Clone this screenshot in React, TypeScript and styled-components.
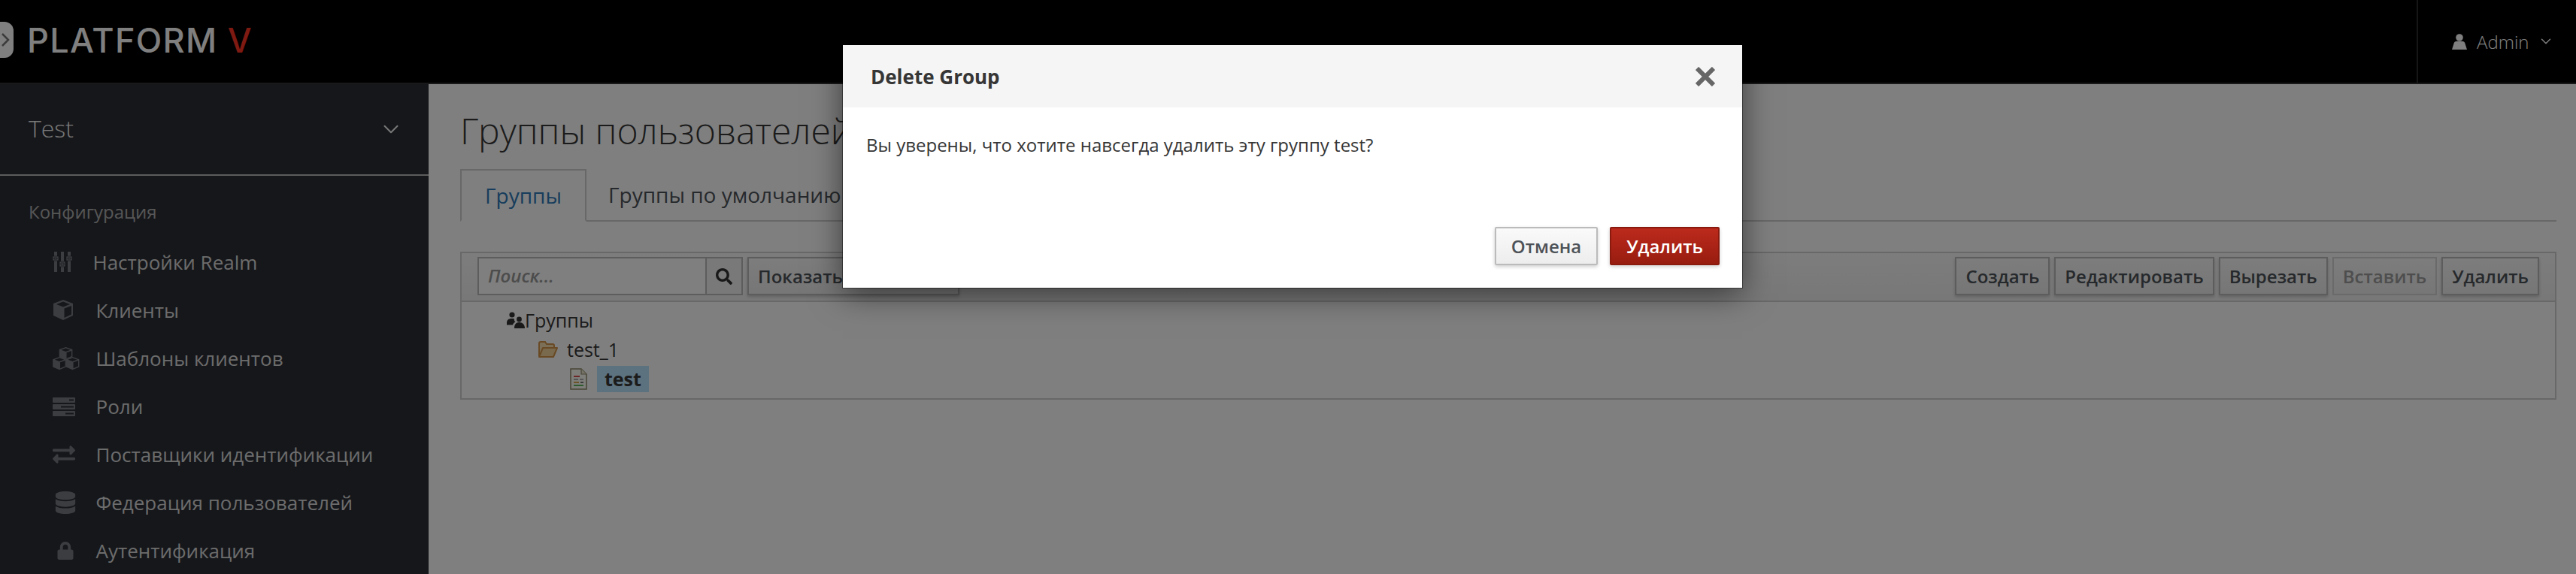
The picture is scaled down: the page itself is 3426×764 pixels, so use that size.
import React from 'react'
import styled, { createGlobalStyle } from 'styled-components'
import { FaDatabase, FaExchangeAlt, FaLock, FaSearch } from 'react-icons/fa'
import { LuChevronDown } from 'react-icons/lu'

const GlobalStyle = createGlobalStyle`
  html, body { margin: 0; padding: 0; height: 100%; }
  body { font-family: "Open Sans", "Noto Sans", sans-serif; color: #363636; background: #fff; }
  * { box-sizing: border-box; }
`

const Page = styled.div`
  position: relative;
  width: 3426px;
  height: 764px;
  overflow: hidden;
  display: flex;
  flex-direction: column;
`
const Header = styled.header`
  height: 112px;
  flex: none;
  background: #000;
  border-bottom: 2px solid #333;
  display: flex;
  justify-content: space-between;
`
const Logo = styled.div`
  display: flex;
  align-items: center;
  gap: 18px;
  padding-bottom: 4px;
`
const LogoMark = styled.div`
  width: 18px;
  height: 48px;
  background: #fff;
  border-radius: 0 12px 12px 0;
  color: #777;
  display: flex;
  align-items: center;
`
const LogoText = styled.span`
  font-family: Inter, "Open Sans", sans-serif;
  font-size: 45px;
  font-weight: 500;
  line-height: 1;
  color: #fff;
  letter-spacing: 1.3px;
`
const LogoV = styled.span`
  color: #fc3424;
`
const UserMenu = styled.div`
  width: 212px;
  border-left: 2px solid #2c2c2c;
  display: flex;
  align-items: center;
  padding-left: 45px;
  color: #fff;
  font-size: 24px;
  font-weight: 300;
`
const UserName = styled.span`
  margin: 0 11px 0 13px;
`
const Body = styled.div`
  flex: 1;
  display: flex;
  min-height: 0;
`
const Sidebar = styled.aside`
  width: 570px;
  flex: none;
  background: #2c2f36;
`
const RealmRow = styled.div`
  height: 122px;
  padding: 0 33px 0 38px;
  display: flex;
  align-items: center;
  justify-content: space-between;
  border-bottom: 2px solid #b8b8b8;
  color: #f0f0f0;
  font-size: 32px;
  font-weight: 300;
`
const RealmName = styled.span`
  padding-bottom: 3px;
`
const SectionLabel = styled.div`
  padding: 30px 0 0 38px;
  height: 82px;
  line-height: 36px;
  font-size: 24px;
  color: #adadad;
`
const NavList = styled.div`
  display: flex;
  flex-direction: column;
`
const NavItem = styled.div<{ $first?: boolean }>`
  height: ${p => (p.$first ? 65 : 64)}px;
  padding-left: 70px;
  display: flex;
  align-items: center;
  font-size: 26px;
  color: #d8d8d8;
`
const NavIcon = styled.span<{ $first?: boolean; $inset?: number }>`
  width: ${p => (p.$first ? 53.5 : 57.5)}px;
  padding-left: ${p => p.$inset ?? 0}px;
  flex: none;
  color: #767a80;
  display: flex;
  align-items: center;
`
const Main = styled.main`
  flex: 1;
  padding: 0 26px 0 42px;
  background: #fff;
`
const Title = styled.h1`
  margin: 0;
  height: 113px;
  padding-top: 27px;
  font-size: 48px;
  line-height: 70px;
  font-weight: 300;
  white-space: nowrap;
  color: #363636;
`
const Tabs = styled.div`
  height: 70px;
  display: flex;
  border-bottom: 2px solid #d1d1d1;
`
const Tab = styled.div<{ $active?: boolean }>`
  height: ${p => (p.$active ? 70 : 68)}px;
  padding: 0 ${p => (p.$active ? 31 : 27)}px;
  display: flex;
  align-items: center;
  font-size: 28px;
  color: ${p => (p.$active ? '#2f7ab8' : '#4d5258')};
  background: #fff;
  border: 2px solid ${p => (p.$active ? '#d1d1d1' : 'transparent')};
  border-bottom-color: ${p => (p.$active ? '#fff' : 'transparent')};
`
const Panel = styled.div`
  margin-top: 40px;
  height: 197px;
  border: 2px solid #d1d1d1;
`
const Toolbar = styled.div`
  height: 65px;
  padding: 5px 21px 0 21px;
  display: flex;
  justify-content: space-between;
  background: linear-gradient(#fafafa, #f0f0f0);
  border-bottom: 2px solid #d1d1d1;
`
const ToolGroup = styled.div`
  display: flex;
  gap: 6px;
`
const SearchBox = styled.div`
  width: 353px;
  height: 51px;
  display: flex;
  background: #fff;
  border: 2px solid #bababa;
`
const SearchInput = styled.div`
  flex: 1;
  padding-left: 12px;
  line-height: 46px;
  font-size: 24px;
  font-style: italic;
  font-weight: 600;
  color: #999;
`
const SearchButton = styled.div`
  width: 48px;
  display: flex;
  align-items: center;
  justify-content: center;
  color: #333;
  background: #f3f3f3;
  border-left: 2px solid #bababa;
`
const ToolButton = styled.div<{ $disabled?: boolean }>`
  height: 51px;
  padding: 0 12px;
  display: flex;
  align-items: center;
  white-space: nowrap;
  font-size: 24px;
  font-weight: 600;
  color: ${p => (p.$disabled ? '#9c9c9c' : '#4d5258')};
  background: linear-gradient(#fafafa, #ededed);
  border: 2px solid ${p => (p.$disabled ? '#d4d4d4' : '#bbb')};
  box-shadow: ${p => (p.$disabled ? 'none' : '0 2px 4px rgba(0, 0, 0, 0.2)')};
`
const Tree = styled.div`
  padding: 4px 0 0 60px;
`
const TreeRow = styled.div<{ $level: number; $gap?: number }>`
  height: 39.5px;
  margin-left: ${p => p.$level * 42}px;
  display: flex;
  align-items: center;
  gap: ${p => p.$gap ?? 0}px;
  font-size: 25px;
  color: #363636;
`
const Selected = styled.span`
  height: 35px;
  padding: 0 10px;
  line-height: 35px;
  font-size: 25px;
  font-weight: 700;
  background: #bbe4ff;
`
const Backdrop = styled.div`
  position: absolute;
  inset: 0;
  background: rgba(0, 0, 0, 0.5);
  padding: 60px 0 0 1121px;
`
const Modal = styled.div`
  width: 1196px;
  height: 323px;
  display: flex;
  flex-direction: column;
  background: #fff;
  box-shadow: 0 8px 40px rgba(0, 0, 0, 0.55), 0 0 0 1px rgba(0, 0, 0, 0.4);
`
const ModalHeader = styled.div`
  height: 83px;
  padding: 0 36px 0 37px;
  display: flex;
  align-items: center;
  justify-content: space-between;
  background: #f5f5f5;
`
const ModalTitle = styled.h4`
  margin: 0;
  font-size: 26px;
  font-weight: 700;
  color: #363636;
`
const ModalBody = styled.div`
  flex: 1;
  padding: 32px 31px 0;
  line-height: 36px;
  font-size: 24px;
  color: #363636;
`
const ModalFooter = styled.div`
  padding: 0 30px 30px;
  display: flex;
  justify-content: flex-end;
  gap: 16px;
`
const DialogButton = styled.div<{ $danger?: boolean }>`
  height: 51px;
  padding: 0 20px;
  display: flex;
  align-items: center;
  font-size: 24px;
  font-weight: 600;
  color: ${p => (p.$danger ? '#fff' : '#4d5258')};
  background: ${p => (p.$danger ? 'linear-gradient(#bc2a1c, #981c10)' : 'linear-gradient(#fafafa, #ededed)')};
  border: 2px solid ${p => (p.$danger ? '#8b1a0e' : '#bbb')};
  border-radius: 2px;
  box-shadow: 0 2px 5px rgba(0, 0, 0, 0.2);
`

const cubePath = 'M14 0 27 5V21L14 27 1 21V5ZM14 2.500 5 6 14 9.500 23 6ZM15.500 11.500V24L25 19.500V8Z'

const CubeIcon = () => (
  <svg width="28" height="28" viewBox="0 0 28 28" fill="currentColor">
    <path d={cubePath} fillRule="evenodd" />
  </svg>
)

const CubesIcon = () => (
  <svg width="37" height="31" viewBox="0 0 37 31" fill="currentColor">
    <path d={cubePath} fillRule="evenodd" transform="translate(8 0) scale(.68 .62)" />
    <path d={cubePath} fillRule="evenodd" transform="translate(-.5 13) scale(.68 .64)" />
    <path d={cubePath} fillRule="evenodd" transform="translate(17 13) scale(.68 .64)" />
  </svg>
)

const SlidersIcon = () => (
  <svg width="26" height="27" viewBox="0 0 26 27" fill="currentColor">
    <path d="M2 0h4v27H2zM11 0h4v27h-4zM20 0h4v27h-4z" />
    <path d="M0 6h8v6H0zM2 8v2h4V8z" fillRule="evenodd" stroke="#15181b" strokeWidth=".5" />
    <path d="M9 13h8v7H9zM11 15v3h4v-3z" fillRule="evenodd" stroke="#15181b" strokeWidth=".5" />
    <path d="M18 6h8v6h-8zM20 8v2h4V8z" fillRule="evenodd" stroke="#15181b" strokeWidth=".5" />
  </svg>
)

const RolesIcon = () => (
  <svg width="30" height="25" viewBox="0 0 30 25" fill="currentColor" fillRule="evenodd">
    <path d="M1 0h28a1 1 0 0 1 1 1v5a1 1 0 0 1-1 1H1a1 1 0 0 1-1-1V1a1 1 0 0 1 1-1zM22 2.500v2h6v-2z" />
    <path d="M1 9h28a1 1 0 0 1 1 1v5a1 1 0 0 1-1 1H1a1 1 0 0 1-1-1v-5a1 1 0 0 1 1-1zM11 11.500v2h17v-2z" />
    <path d="M1 18h28a1 1 0 0 1 1 1v5a1 1 0 0 1-1 1H1a1 1 0 0 1-1-1v-5a1 1 0 0 1 1-1zM17 20.500v2h11v-2z" />
  </svg>
)

const UserIcon = () => (
  <svg width="20" height="21" viewBox="0 0 20 21" fill="currentColor">
    <circle cx="10" cy="5" r="4.800" />
    <path d="M6 10h8c2 0 3 1 3.500 3L20 21H0l2.500-8C3 11 4 10 6 10z" />
  </svg>
)

const GroupsIcon = () => (
  <svg width="24" height="22" viewBox="0 0 24 22" fill="#333">
    <circle cx="7" cy="4" r="3.600" />
    <circle cx="16.500" cy="10" r="3.400" />
    <path d="M0 15c0-4 2-6 7-6 1 0 2 .1 3 .5-.4 2 .4 3 1.500 4-2 1-3 2-3.500 4H0z" />
    <path d="M10 22c0-5 2-8 6.500-8s7.500 3 7.500 8z" />
  </svg>
)

const FolderOpenIcon = () => (
  <svg width="26" height="22" viewBox="0 0 26 22">
    <path d="M1 20V3a2 2 0 0 1 2-2h6l2 3h8a2 2 0 0 1 2 2v3" fill="#f8dfae" stroke="#d2954a" strokeWidth="2" />
    <path d="M1 21 6 9h19l-5 12z" fill="#f3d29a" stroke="#d2954a" strokeWidth="2" strokeLinejoin="round" />
  </svg>
)

const DocIcon = () => (
  <svg width="23" height="29" viewBox="0 0 23 29">
    <path d="M1 1h14l7 7v20H1z" fill="#fdfcf6" stroke="#8f8a6a" strokeWidth="1.500" />
    <path d="M15 1v7h7" fill="#ece8d0" stroke="#8f8a6a" strokeWidth="1.200" />
    <rect x="5" y="10" width="8" height="2" fill="#d9534f" />
    <rect x="5" y="14" width="6" height="2" fill="#aaa" />
    <rect x="13" y="14" width="5" height="2" fill="#aaa" />
    <rect x="5" y="18" width="7" height="2" fill="#d9a54f" />
    <rect x="14" y="18" width="4" height="2" fill="#777" />
    <rect x="5" y="22" width="13" height="2" fill="#5cb85c" />
  </svg>
)

const CloseIcon = () => (
  <svg width="26" height="26" viewBox="0 0 26 26" stroke="#666" strokeWidth="6">
    <path d="M2 2l22 22M24 2 2 24" />
  </svg>
)

const navItems = [
  { label: 'Клиенты', icon: <CubeIcon /> },
  { label: 'Шаблоны клиентов', icon: <CubesIcon /> },
  { label: 'Роли', icon: <RolesIcon /> },
  { label: 'Поставщики идентификации', icon: <FaExchangeAlt size={30} /> },
  { label: 'Федерация пользователей', icon: <FaDatabase size={30} />, inset: 2 },
  { label: 'Аутентификация', icon: <FaLock size={24} />, inset: 5 },
]

const App = () => {
  return (
    <Page>
      <GlobalStyle />
      <Header>
        <Logo>
          <LogoMark>
            <svg width="16" height="24" viewBox="0 0 16 24" fill="none" stroke="currentColor" strokeWidth="2.500">
              <path d="M3 4l8 8-8 8" />
            </svg>
          </LogoMark>
          <LogoText>PLATFORM <LogoV>V</LogoV></LogoText>
        </Logo>
        <UserMenu>
          <UserIcon />
          <UserName>Admin</UserName>
          <LuChevronDown size={22} strokeWidth={1.6} />
        </UserMenu>
      </Header>
      <Body>
        <Sidebar>
          <RealmRow>
            <RealmName>Test</RealmName>
            <LuChevronDown size={34} strokeWidth={1.4} />
          </RealmRow>
          <SectionLabel>Конфигурация</SectionLabel>
          <NavList>
            <NavItem $first>
              <NavIcon $first><SlidersIcon /></NavIcon>
              Настройки Realm
            </NavItem>
            {navItems.map(item => (
              <NavItem key={item.label}>
                <NavIcon $inset={item.inset}>{item.icon}</NavIcon>
                {item.label}
              </NavItem>
            ))}
          </NavList>
        </Sidebar>
        <Main>
          <Title>Группы пользователей</Title>
          <Tabs>
            <Tab $active>Группы</Tab>
            <Tab>Группы по умолчанию</Tab>
          </Tabs>
          <Panel>
            <Toolbar>
              <ToolGroup>
                <SearchBox>
                  <SearchInput>Поиск...</SearchInput>
                  <SearchButton><FaSearch size={22} /></SearchButton>
                </SearchBox>
                <ToolButton>Показать все группы</ToolButton>
              </ToolGroup>
              <ToolGroup>
                <ToolButton>Создать</ToolButton>
                <ToolButton>Редактировать</ToolButton>
                <ToolButton>Вырезать</ToolButton>
                <ToolButton $disabled>Вставить</ToolButton>
                <ToolButton>Удалить</ToolButton>
              </ToolGroup>
            </Toolbar>
            <Tree>
              <TreeRow $level={0}><GroupsIcon />Группы</TreeRow>
              <TreeRow $level={1} $gap={12}><FolderOpenIcon />test_1</TreeRow>
              <TreeRow $level={2} $gap={13}><DocIcon /><Selected>test</Selected></TreeRow>
            </Tree>
          </Panel>
        </Main>
      </Body>
      <Backdrop>
        <Modal>
          <ModalHeader>
            <ModalTitle>Delete Group</ModalTitle>
            <CloseIcon />
          </ModalHeader>
          <ModalBody>Вы уверены, что хотите навсегда удалить эту группу test?</ModalBody>
          <ModalFooter>
            <DialogButton>Отмена</DialogButton>
            <DialogButton $danger>Удалить</DialogButton>
          </ModalFooter>
        </Modal>
      </Backdrop>
    </Page>
  )
}

export default App
